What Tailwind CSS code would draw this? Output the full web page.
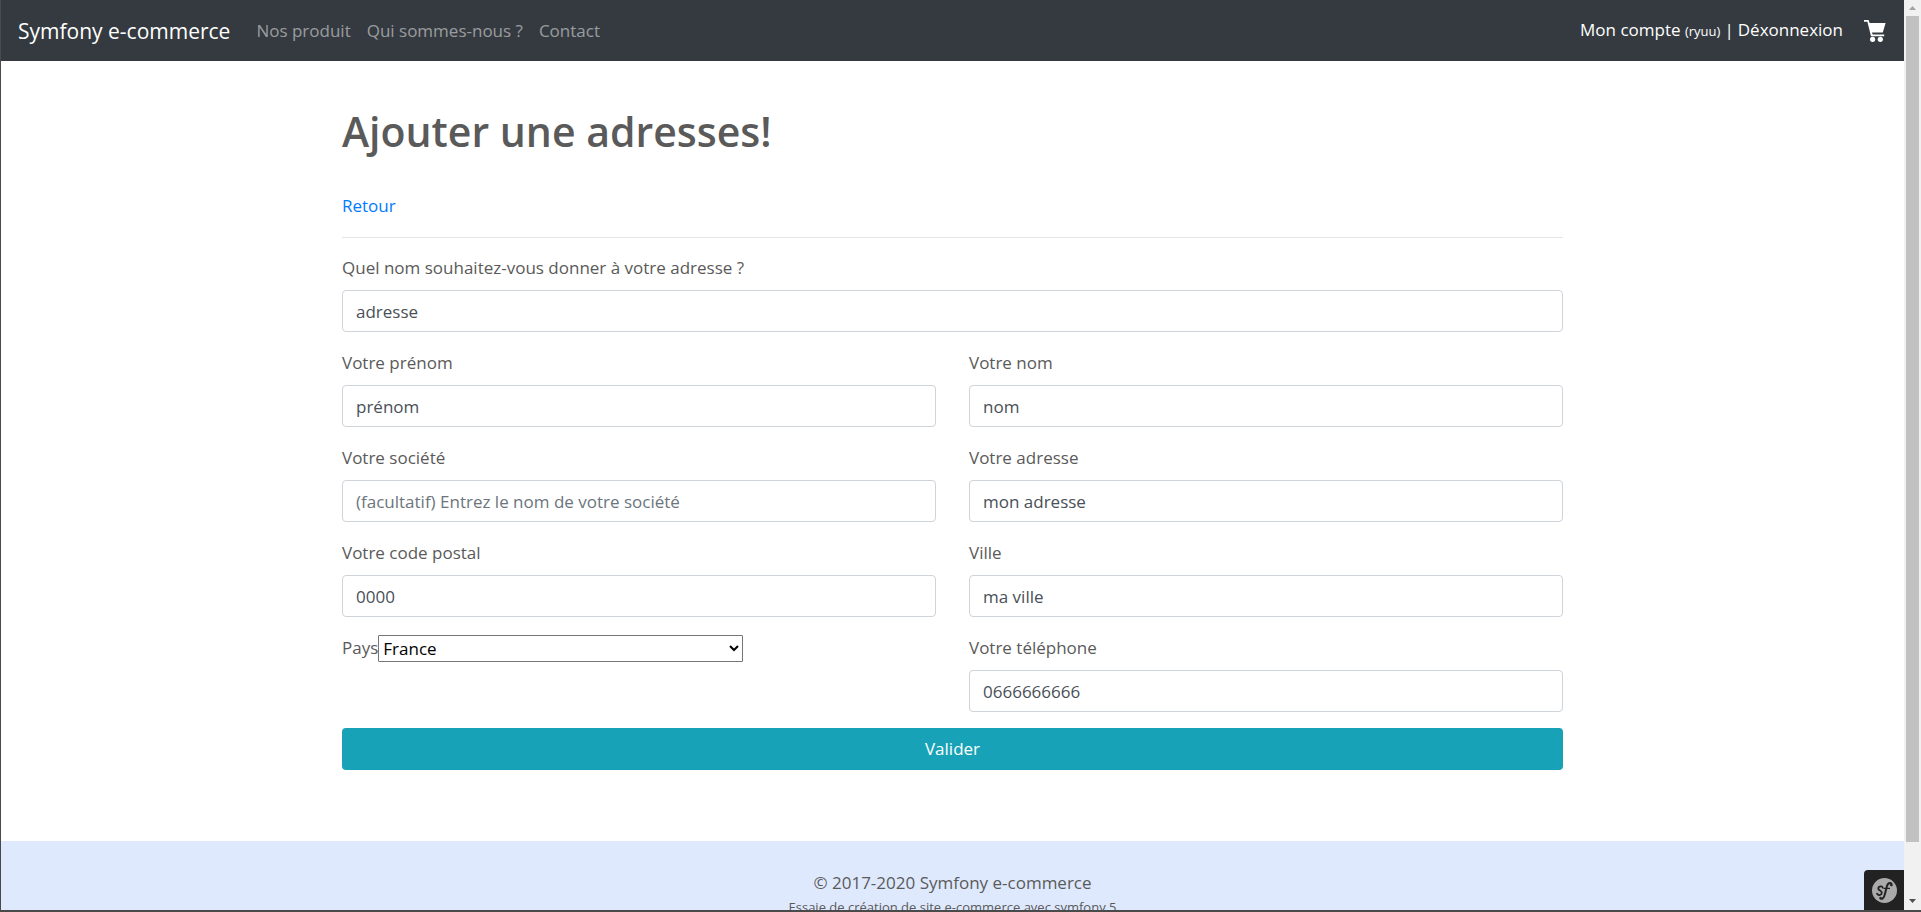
<!DOCTYPE html>
<html lang="fr">
<head>
<meta charset="utf-8">
<meta name="viewport" content="width=device-width, initial-scale=1">
<title>Symfony e-commerce</title>
<script src="https://cdn.jsdelivr.net/npm/@tailwindcss/browser@4"></script>
</head>
<body class="h-screen overflow-hidden flex border-l border-b-2 border-[#4a4a4a] bg-white text-[17px] leading-[26px] text-[#5a5a5a] font-['Open_Sans','Noto_Sans',sans-serif]">
  <div class="relative flex-1 min-w-0 overflow-hidden flex flex-col">
    <nav class="shrink-0 h-[61px] flex items-center bg-[#343a40] pl-[17px] pr-[18px]">
      <a href="#" class="text-[21px] text-white mr-[26px]">Symfony e-commerce</a>
      <ul class="flex gap-4 text-white/50">
        <li><a href="#">Nos produit</a></li>
        <li><a href="#">Qui sommes-nous ?</a></li>
        <li><a href="#">Contact</a></li>
      </ul>
      <div class="ml-auto flex items-baseline gap-1 text-white">
        <a href="#">Mon compte <small class="text-[13px]">(ryuu)</small></a><span>|</span><a href="#">Déxonnexion</a>
      </div>
      <a href="#" aria-label="Panier" class="ml-[21px]">
        <svg class="w-[22px] h-[22px]" viewBox="0 0 22 22" fill="#fff">
          <path d="M0 0h4.6l1 3H21.6l-2.8 9.6H8l.6 1.8h11.6v1.8H7L3.4 1.8H0z"/>
          <circle cx="8.6" cy="19.3" r="2.6"/>
          <circle cx="16.3" cy="19.3" r="2.6"/>
        </svg>
      </a>
    </nav>

    <main class="shrink-0 w-full max-w-[1255px] mx-auto px-[17px] pt-[44px] pb-[71px]">
      <h1 class="text-[41px] leading-[53px] font-semibold">Ajouter une adresses!</h1>
      <p class="mt-[35px]"><a href="#" class="text-[#007bff]">Retour</a></p>
      <hr class="mt-[18px] mb-[17px] border-[#e5e5e5]">
      <form>
        <label for="name" class="block mb-[9px]">Quel nom souhaitez-vous donner à votre adresse ?</label>
        <input id="name" type="text" value="adresse" class="block w-full h-[42px] mb-[18px] px-[13px] border border-[#ced4da] rounded text-[#495057]">
        <div class="grid grid-cols-2 gap-x-[33px] gap-y-[18px]">
          <div>
            <label for="firstname" class="block mb-[9px]">Votre prénom</label>
            <input id="firstname" type="text" value="prénom" class="block w-full h-[42px] px-[13px] border border-[#ced4da] rounded text-[#495057]">
          </div>
          <div>
            <label for="lastname" class="block mb-[9px]">Votre nom</label>
            <input id="lastname" type="text" value="nom" class="block w-full h-[42px] px-[13px] border border-[#ced4da] rounded text-[#495057]">
          </div>
          <div>
            <label for="company" class="block mb-[9px]">Votre société</label>
            <input id="company" type="text" placeholder="(facultatif) Entrez le nom de votre société" class="block w-full h-[42px] px-[13px] border border-[#ced4da] rounded text-[#495057] placeholder:text-[#6c757d]">
          </div>
          <div>
            <label for="address" class="block mb-[9px]">Votre adresse</label>
            <input id="address" type="text" value="mon adresse" class="block w-full h-[42px] px-[13px] border border-[#ced4da] rounded text-[#495057]">
          </div>
          <div>
            <label for="postal" class="block mb-[9px]">Votre code postal</label>
            <input id="postal" type="text" value="0000" class="block w-full h-[42px] px-[13px] border border-[#ced4da] rounded text-[#495057]">
          </div>
          <div>
            <label for="city" class="block mb-[9px]">Ville</label>
            <input id="city" type="text" value="ma ville" class="block w-full h-[42px] px-[13px] border border-[#ced4da] rounded text-[#495057]">
          </div>
          <div class="flex items-start">
            <label for="country">Pays</label>
            <select id="country" class="w-[365px] h-[27px] border border-[#767676] rounded-[1px] bg-white text-black">
              <option>France</option>
            </select>
          </div>
          <div>
            <label for="phone" class="block mb-[9px]">Votre téléphone</label>
            <input id="phone" type="tel" value="0666666666" class="block w-full h-[42px] px-[13px] border border-[#ced4da] rounded text-[#495057]">
          </div>
        </div>
        <button type="submit" class="block w-full h-[42px] mt-4 rounded bg-[#17a2b8] text-white">Valider</button>
      </form>
    </main>

    <footer class="shrink-0 bg-[#dee9fe] pt-[29px] pb-8 text-center">
      <p>© 2017-2020 Symfony e-commerce</p>
      <p class="text-[13px] leading-[22px]">Essaie de création de site e-commerce avec symfony 5</p>
    </footer>

    <button type="button" aria-label="Symfony" class="absolute right-0 bottom-0 w-10 h-10 flex items-center justify-center bg-[#222] rounded-tl">
      <svg class="w-[25px] h-[25px]" viewBox="0 0 25 25">
        <circle cx="12.5" cy="12.5" r="12.5" fill="#aaa"/>
        <g fill="none" stroke="#222" stroke-linecap="round">
          <path d="M10.6 9.6C10.4 7.6 6.2 8 6.3 10.6C6.4 12.8 10 12.4 9.8 15C9.6 17.4 5.6 17.8 5 15.6" stroke-width="1.8"/>
          <path d="M19.6 7.2C20 4.2 16.2 4 14.9 8.2L12.8 16.4C12 20 10 21.6 8.4 20.4" stroke-width="2"/>
          <path d="M12 10.4H17.4" stroke-width="1.3"/>
        </g>
        <circle cx="19.2" cy="7.2" r="1.1" fill="#222"/>
        <circle cx="8.5" cy="19.8" r="1.1" fill="#222"/>
      </svg>
    </button>
  </div>

  <div class="w-[17px] shrink-0 flex flex-col items-center bg-[#f1f1f1]" aria-hidden="true">
    <div class="h-4 flex items-center justify-center"><svg class="w-[7px] h-1" viewBox="0 0 7 4"><path d="M0 4 3.5 0 7 4z" fill="#a3a3a3"/></svg></div>
    <div class="w-[13px] basis-[826px] bg-[#c1c1c1]"></div>
    <div class="mt-auto h-[18px] flex items-center justify-center"><svg class="w-[7px] h-1" viewBox="0 0 7 4"><path d="M0 0 3.5 4 7 0z" fill="#505050"/></svg></div>
  </div>
</body>
</html>
